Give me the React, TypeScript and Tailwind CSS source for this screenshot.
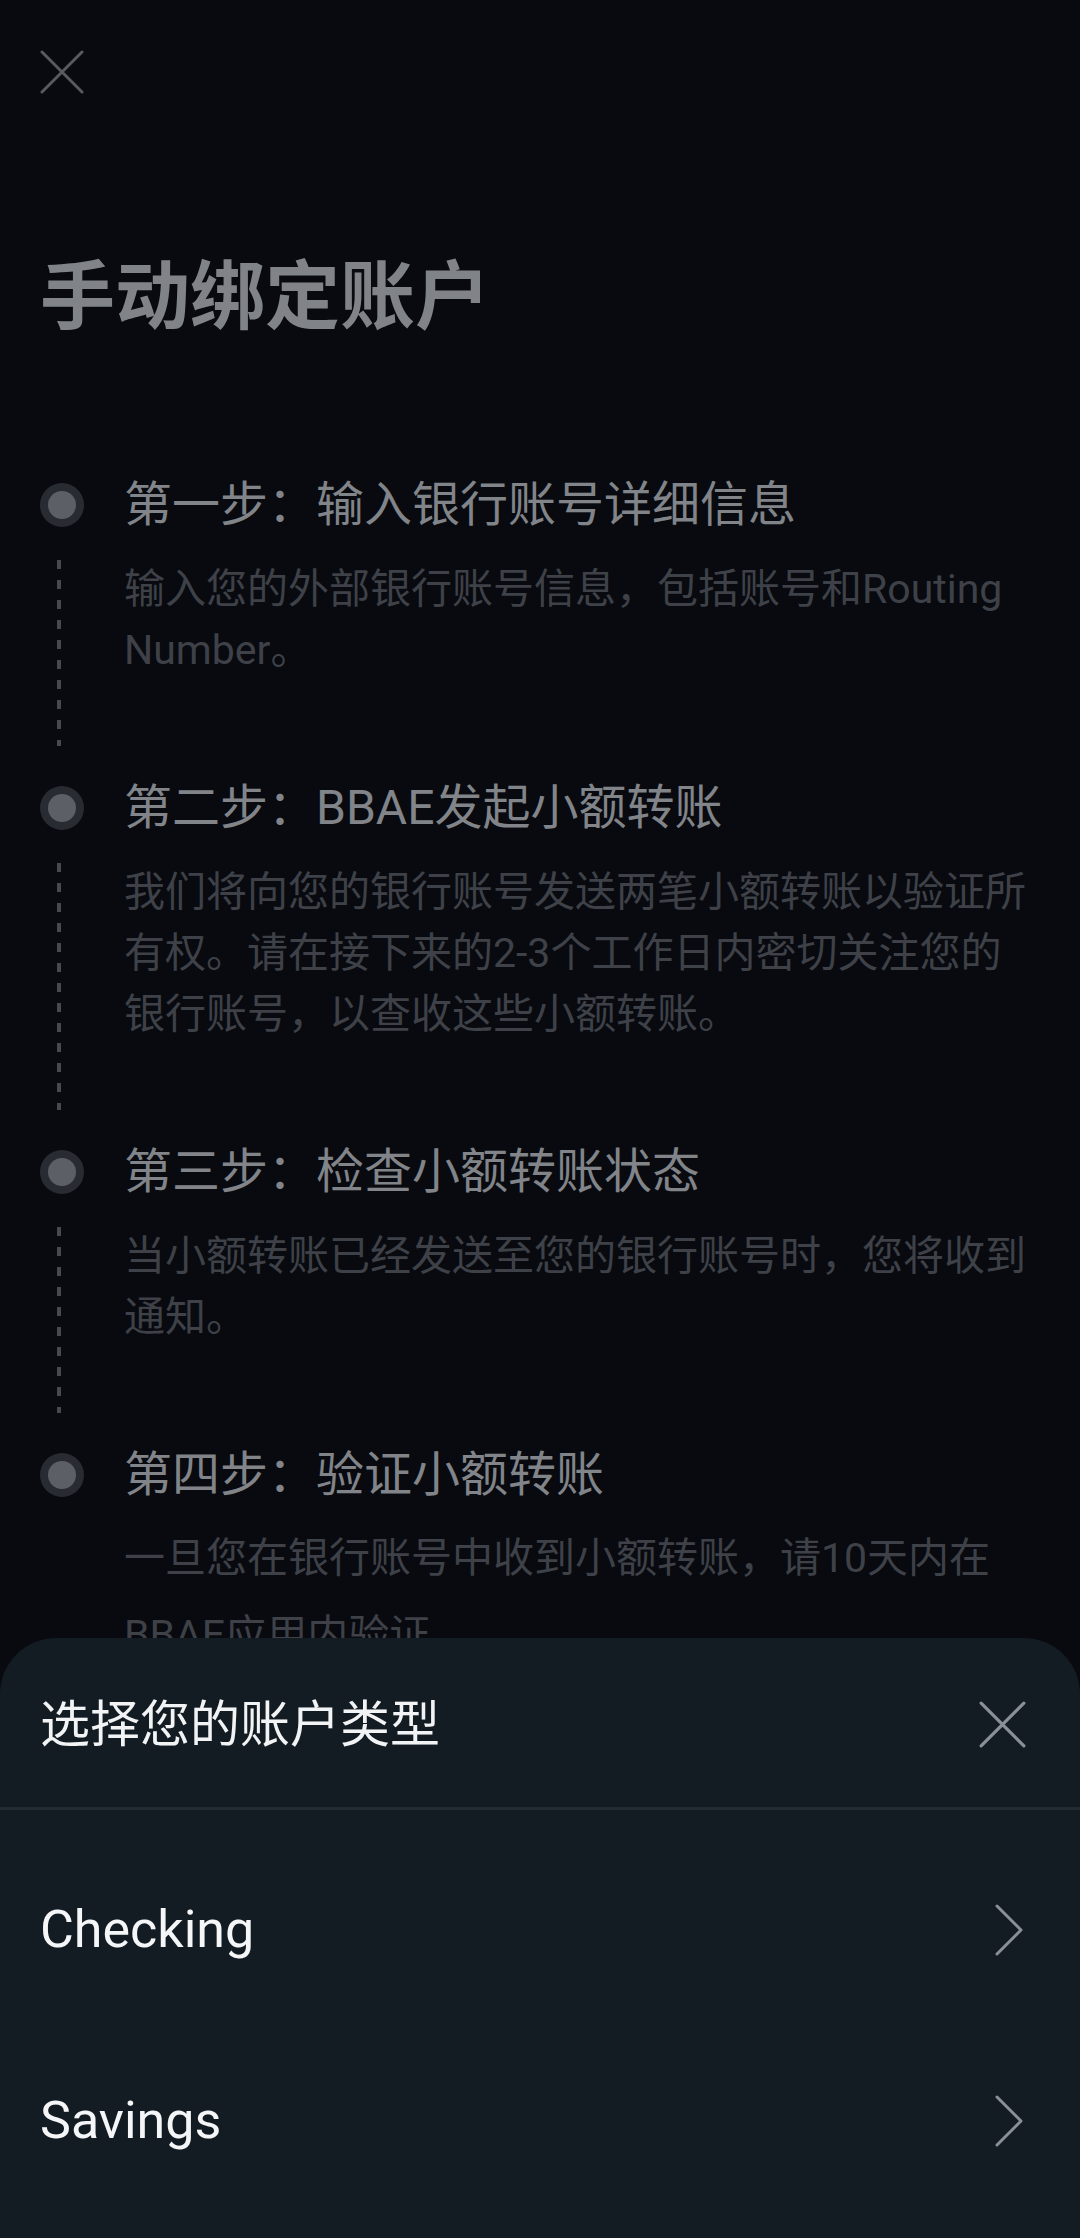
import React from "react";

const steps = [
  {
    title: "第一步：输入银行账号详细信息",
    desc: "输入您的外部银行账号信息，包括账号和Routing Number。",
  },
  {
    title: "第二步：BBAE发起小额转账",
    desc: "我们将向您的银行账号发送两笔小额转账以验证所有权。请在接下来的2-3个工作日内密切关注您的银行账号，以查收这些小额转账。",
  },
  {
    title: "第三步：检查小额转账状态",
    desc: "当小额转账已经发送至您的银行账号时，您将收到通知。",
  },
  {
    title: "第四步：验证小额转账",
    desc: "一旦您在银行账号中收到小额转账，请10天内在BBAE应用内验证。",
  },
];

function CloseIcon({ size, color }: { size: number; color: string }) {
  return (
    <svg width={size} height={size} viewBox="0 0 44 44" fill="none">
      <path d="M2 2L42 42M42 2L2 42" stroke={color} strokeWidth="3" strokeLinecap="round" />
    </svg>
  );
}

function Chevron() {
  return (
    <svg width="30" height="52" viewBox="0 0 30 52" fill="none">
      <path d="M3 2L27 26L3 50" stroke="#8a9099" strokeWidth="3" strokeLinecap="round" strokeLinejoin="round" />
    </svg>
  );
}

export default function App() {
  return (
    <div
      className="relative h-[2238px] w-[1080px] overflow-hidden bg-[#080a0f]"
      style={{ fontFamily: 'Roboto, "Noto Sans CJK SC", "Noto Sans", sans-serif' }}
    >
      <div className="px-[40px]">
        {/* top bar */}
        <div className="pt-[50px]">
          <CloseIcon size={44} color="#575b61" />
        </div>

        <h1 className="mt-[156px] text-[75px] font-bold leading-[94px] text-[#808387]">手动绑定账户</h1>

        {/* steps */}
        <div className="mt-[127px]">
          {steps.map((step, i) => {
            const last = i === steps.length - 1;
            return (
              <div key={i} className="flex gap-[40px]">
                <div className="flex w-[44px] shrink-0 flex-col items-center">
                  <div className="mt-[12px] flex h-[44px] w-[44px] items-center justify-center rounded-full bg-[#282b31]">
                    <div className="h-[28px] w-[28px] rounded-full bg-[#5c5f65]" />
                  </div>
                  {!last && (
                    <div className="mb-[28px] mt-[33px] w-[4px] flex-1 -translate-x-[3px] bg-[linear-gradient(to_bottom,#464950_9px,transparent_9px)] bg-[length:4px_20px] bg-repeat-y" />
                  )}
                </div>
                <div className="flex-1 pb-[93px] pr-[8px]">
                  <h3 className="text-[48px] leading-[68px] text-[#818489]">{step.title}</h3>
                  {last ? (
                    <p className="mt-[11px] text-[41px] leading-[77px] text-[#3e4148]">{step.desc}</p>
                  ) : (
                    <p className="mt-[20px] text-[41px] leading-[61px] text-[#3e4148]">{step.desc}</p>
                  )}
                </div>
              </div>
            );
          })}
        </div>
      </div>

      {/* bottom sheet */}
      <div className="absolute inset-x-0 bottom-0 h-[600px] rounded-t-[56px] bg-[#141c23]">
        <div className="flex h-[169px] items-center justify-between pl-[40px] pr-[54px] pt-[4px]">
          <span className="text-[50px] leading-none text-[#f1f3f4]">选择您的账户类型</span>
          <CloseIcon size={47} color="#8a9099" />
        </div>
        <div className="h-[3px] bg-[#222a32]" />
        <div className="pt-[24px]">
          {["Checking", "Savings"].map((label) => (
            <div key={label} className="flex h-[191px] items-center justify-between pl-[40px] pr-[56px]">
              <span className="text-[52px] leading-none text-[#f4f6f7]">{label}</span>
              <Chevron />
            </div>
          ))}
        </div>
      </div>
    </div>
  );
}
